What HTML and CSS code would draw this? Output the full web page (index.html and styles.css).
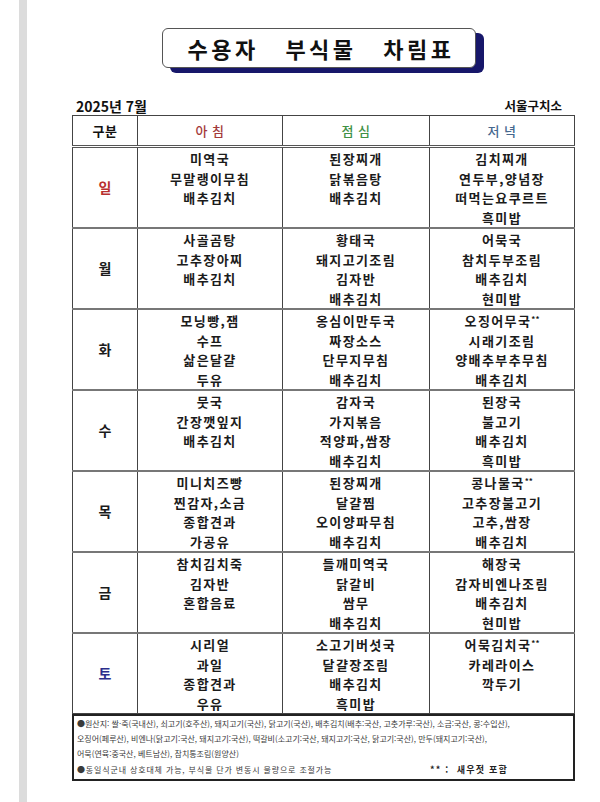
FILE: index.html
```html
<!DOCTYPE html>
<html lang="ko">
<head>
<meta charset="utf-8">
<title>수용자 부식물 차림표</title>
<link rel="stylesheet" href="styles.css">
</head>
<body>
<div class="page">
  <div class="title-box"><h1 class="title">수용자 부식물 차림표</h1></div>
  <div class="meta">
    <span class="month">2025년 7월</span>
    <span class="office">서울구치소</span>
  </div>
  <table class="menu">
    <colgroup>
      <col class="c-day"><col class="c-meal"><col class="c-meal2"><col class="c-meal">
    </colgroup>
    <thead>
      <tr>
        <th class="h-day">구분</th>
        <th class="h-am">아 침</th>
        <th class="h-noon">점 심</th>
        <th class="h-pm">저 녁</th>
      </tr>
    </thead>
    <tbody>
      <tr>
        <td class="day sun">일</td>
        <td>미역국<br>무말랭이무침<br>배추김치</td>
        <td>된장찌개<br>닭볶음탕<br>배추김치</td>
        <td>김치찌개<br>연두부,양념장<br>떠먹는요쿠르트<br>흑미밥</td>
      </tr>
      <tr>
        <td class="day">월</td>
        <td>사골곰탕<br>고추장아찌<br>배추김치</td>
        <td>황태국<br>돼지고기조림<br>김자반<br>배추김치</td>
        <td>어묵국<br>참치두부조림<br>배추김치<br>현미밥</td>
      </tr>
      <tr>
        <td class="day">화</td>
        <td>모닝빵,잼<br>수프<br>삶은달걀<br>두유</td>
        <td>옹심이만두국<br>짜장소스<br>단무지무침<br>배추김치</td>
        <td>오징어무국<span class="mark">**</span><br>시래기조림<br>양배추부추무침<br>배추김치</td>
      </tr>
      <tr>
        <td class="day">수</td>
        <td>뭇국<br>간장깻잎지<br>배추김치</td>
        <td>감자국<br>가지볶음<br>적양파,쌈장<br>배추김치</td>
        <td>된장국<br>불고기<br>배추김치<br>흑미밥</td>
      </tr>
      <tr>
        <td class="day">목</td>
        <td>미니치즈빵<br>찐감자,소금<br>종합견과<br>가공유</td>
        <td>된장찌개<br>달걀찜<br>오이양파무침<br>배추김치</td>
        <td>콩나물국<span class="mark">**</span><br>고추장불고기<br>고추,쌈장<br>배추김치</td>
      </tr>
      <tr>
        <td class="day">금</td>
        <td>참치김치죽<br>김자반<br>혼합음료</td>
        <td>들깨미역국<br>닭갈비<br>쌈무<br>배추김치</td>
        <td>해장국<br>감자비엔나조림<br>배추김치<br>현미밥</td>
      </tr>
      <tr class="last">
        <td class="day sat">토</td>
        <td>시리얼<br>과일<br>종합견과<br>우유</td>
        <td>소고기버섯국<br>달걀장조림<br>배추김치<br>흑미밥</td>
        <td>어묵김치국<span class="mark">**</span><br>카레라이스<br>깍두기</td>
      </tr>
    </tbody>
  </table>
  <div class="note">
    <p class="note-line">●원산지: 쌀·죽(국내산), 쇠고기(호주산), 돼지고기(국산), 닭고기(국산), 배추김치(배추:국산, 고춧가루:국산), 소금:국산, 콩:수입산),</p>
    <p class="note-line">오징어(페루산), 비엔나(닭고기:국산, 돼지고기:국산), 떡갈비(소고기:국산, 돼지고기:국산, 닭고기:국산), 만두(돼지고기:국산),</p>
    <p class="note-line">어묵(연육:중국산, 베트남산), 참치통조림(원양산)</p>
    <div class="note-last">
      <span class="rule">●동일식군내 상호대체 가능, 부식물 단가 변동시 물량으로 조절가능</span>
      <span class="shrimp">** :&nbsp; 새우젓 포함</span>
    </div>
  </div>
</div>
</body>
</html>
```

FILE: styles.css
```css
* { box-sizing: border-box; }

html, body {
  margin: 0;
  padding: 0;
  background: #ffffff;
}

body {
  font-family: "Noto Sans CJK KR", "Noto Sans", sans-serif;
  color: #1a1a1a;
}

.page {
  margin-left: 19px;
  border-left: 8px solid #dcdcdc;
  min-height: 802px;
  padding: 28px 0 0 45px;
}

.title-box {
  margin-left: 90px;
  width: 314px;
  height: 40px;
  border: 1px solid #555;
  border-radius: 6px;
  background: #fff;
  box-shadow: 8px 5px 0 #17176a;
  display: flex;
  align-items: center;
  justify-content: center;
  padding-left: 4px;
}

.title {
  margin: 0;
  font-size: 22px;
  font-weight: 700;
  letter-spacing: 3.5px;
  word-spacing: 17px;
  line-height: 1;
  color: #111;
}

.meta {
  margin-top: 28px;
  width: 503px;
  height: 19px;
  padding-right: 13px;
  display: flex;
  justify-content: space-between;
  align-items: center;
  font-weight: 700;
  color: #111;
}

.month { font-size: 14px; padding-left: 4px; }
.office { font-size: 12.5px; }

.menu {
  width: 503px;
  border-collapse: collapse;
  table-layout: fixed;
  border: 1px solid #444;
}

.c-day { width: 65px; }
.c-meal { width: 145px; }
.c-meal2 { width: 147px; }

.menu th {
  height: 31px;
  border: 1px solid #444;
  border-bottom: 3px double #555;
  font-size: 13px;
  font-weight: 500;
  letter-spacing: 0.5px;
  padding: 0;
}

.h-day { color: #111; font-weight: 700 !important; }
.h-am { color: #a33a3a; }
.h-noon { color: #3f9145; }
.h-pm { color: #46688f; }

.menu td {
  height: 80.5px;
  border-left: 1px solid #444;
  border-right: 1px solid #444;
  border-bottom: 2px solid #777;
  vertical-align: top;
  text-align: center;
  padding: 1px 0 0;
  font-size: 13px;
  font-weight: 700;
  line-height: 19.5px;
  letter-spacing: 1.4px;
  color: #1b1b1b;
}

.menu tr.last td { border-bottom: none; }

.menu td.day {
  vertical-align: middle;
  font-size: 14px;
  letter-spacing: 0;
  padding: 0;
}

.sun { color: #b8302f !important; }
.sat { color: #2b2e8c !important; }

.mark {
  font-size: 8px;
  letter-spacing: 0;
  vertical-align: 4px;
  line-height: 0;
}

.note {
  width: 503px;
  border: 2px solid #222;
  padding: 0 3px 2px;
  font-size: 8px;
  line-height: 15px;
  color: #3a3a3a;
}

.note-line {
  margin: 0;
  white-space: nowrap;
}

.note-last {
  margin-top: 1px;
  display: flex;
  justify-content: space-between;
  align-items: baseline;
  padding-right: 62px;
  white-space: nowrap;
}

.rule { letter-spacing: 0.85px; }

.shrimp {
  font-size: 9px;
  font-weight: 700;
  letter-spacing: 1.2px;
  color: #222;
}
```
